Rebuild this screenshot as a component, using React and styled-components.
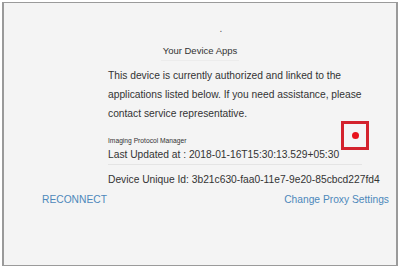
import React from 'react';
import styled, { createGlobalStyle } from 'styled-components';

const GlobalStyle = createGlobalStyle`
  html, body {
    margin: 0;
    padding: 0;
    background: #ffffff;
  }
  body {
    font-family: 'Liberation Sans', Arial, sans-serif;
  }
`;

const Page = styled.div`
  padding: 2px 2px 2px 2px;
  width: 400px;
  height: 268px;
  box-sizing: border-box;
`;

const Frame = styled.div`
  height: 264px;
  box-sizing: border-box;
  border: 1px solid #9a9a9a;
  border-left-width: 2px;
  border-right-width: 2px;
  background: #f4f4f4;
  color: #333333;
  display: flex;
  flex-direction: column;
`;

const Dot = styled.div`
  margin-top: 20px;
  text-align: center;
  padding-left: 42px;
  font-size: 10px;
  line-height: 12px;
  color: #555;
`;

const Heading = styled.div`
  align-self: center;
  margin-top: 10px;
  padding: 0 2px 3px;
  font-size: 9.5px;
  line-height: 12px;
  border-bottom: 1px solid #ececec;
`;

const Content = styled.div`
  margin-left: 104px;
  width: 262px;
`;

const Intro = styled.p`
  margin: 5px 0 0;
  font-size: 10.25px;
  line-height: 19px;
`;

const AppCard = styled.div`
  position: relative;
  margin-top: 14px;
`;

const AppName = styled.div`
  font-size: 6.7px;
  line-height: 8px;
`;

const Updated = styled.div`
  font-size: 10.25px;
  line-height: 14px;
  margin-top: 3px;
  padding-bottom: 2px;
  width: 254px;
  border-bottom: 1px solid #e4e4e4;
`;

const StatusBox = styled.div`
  position: absolute;
  left: 233px;
  top: -16px;
  width: 28px;
  height: 29px;
  box-sizing: border-box;
  border: 3px solid #d3222c;
  display: flex;
  align-items: center;
  justify-content: center;
`;

const StatusDot = styled.span`
  width: 7px;
  height: 7px;
  border-radius: 50%;
  background: ${({ $color }) => $color};
`;

const DeviceId = styled.div`
  margin-top: 8px;
  font-size: 10.25px;
  line-height: 14px;
  white-space: nowrap;
`;

const Actions = styled.div`
  display: flex;
  justify-content: space-between;
  padding: 6px 7px 0 38px;
`;

const LinkButton = styled.a`
  font-size: 10.25px;
  line-height: 14px;
  color: #4d88bb;
  text-decoration: none;
  cursor: pointer;
`;

const App = () => {
  return (
    <Page>
      <GlobalStyle />
      <Frame>
        <Dot>.</Dot>
        <Heading>Your Device Apps</Heading>

        <Content>
          <Intro>
            This device is currently authorized and linked to the applications listed below. If
            you need assistance, please contact service representative.
          </Intro>

          <AppCard>
            <AppName>Imaging Protocol Manager</AppName>
            <Updated>Last Updated at : 2018-01-16T15:30:13.529+05:30</Updated>
            <StatusBox>
              <StatusDot $color="#e8141b" />
            </StatusBox>
          </AppCard>

          <DeviceId>Device Unique Id: 3b21c630-faa0-11e7-9e20-85cbcd227fd4</DeviceId>
        </Content>

        <Actions>
          <LinkButton>RECONNECT</LinkButton>
          <LinkButton>Change Proxy Settings</LinkButton>
        </Actions>
      </Frame>
    </Page>
  );
};

export default App;
